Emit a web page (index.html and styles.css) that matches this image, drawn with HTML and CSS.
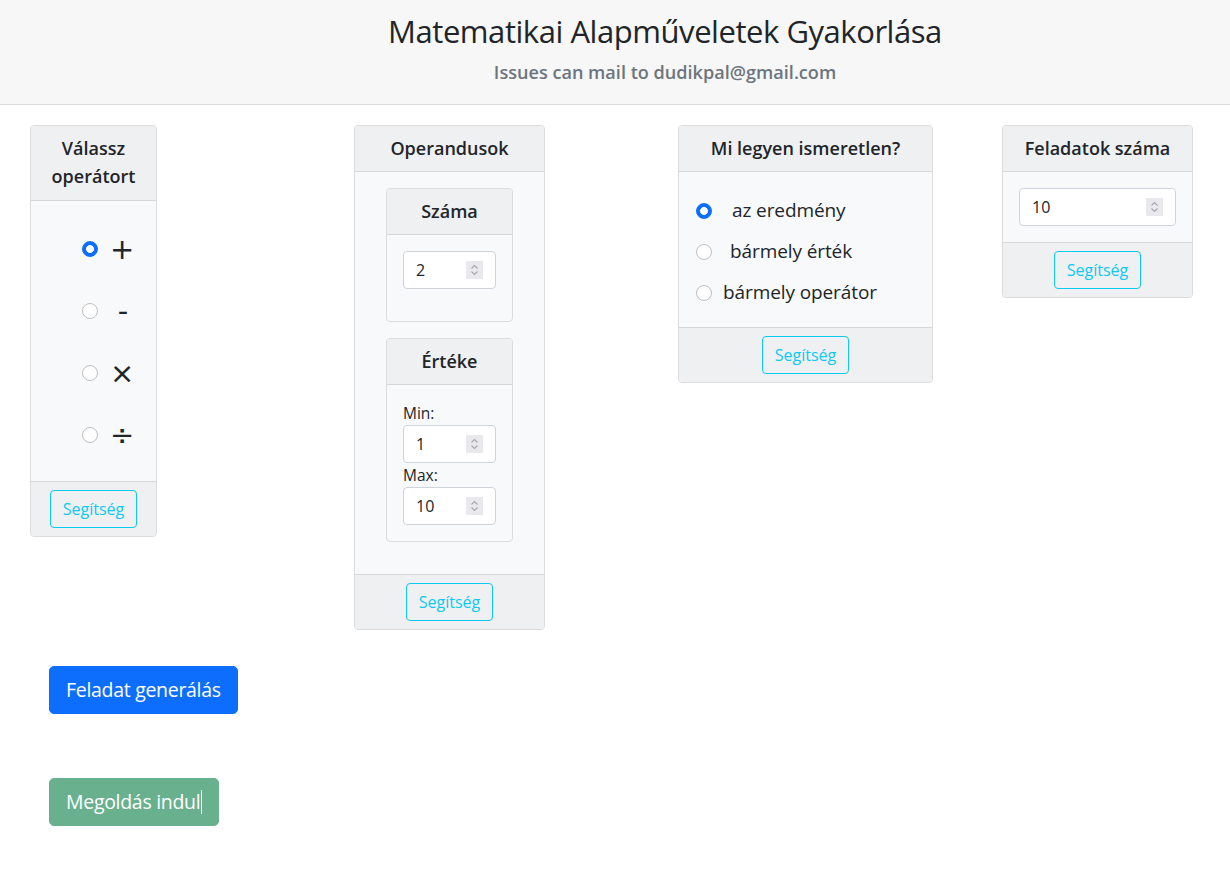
FILE: index.html
```html
<!DOCTYPE html>
<html lang="hu">
<head>
<meta charset="utf-8">
<title>Matematikai Alapműveletek Gyakorlása</title>
<link rel="stylesheet" href="styles.css">
</head>
<body>
<header class="page-header">
  <h1 class="title">Matematikai Alapműveletek Gyakorlása</h1>
  <p class="subtitle">Issues can mail to dudikpal@gmail.com</p>
</header>

<main class="main">
  <div class="cards">
    <section class="card card-ops">
      <div class="card-header ops-header">Válassz operátort</div>
      <div class="card-body ops-body">
        <label class="op-row"><input type="radio" name="op" class="radio" checked><span class="op-glyph">+</span></label>
        <label class="op-row"><input type="radio" name="op" class="radio"><span class="op-glyph op-minus">-</span></label>
        <label class="op-row"><input type="radio" name="op" class="radio"><span class="op-glyph">×</span></label>
        <label class="op-row"><input type="radio" name="op" class="radio"><span class="op-glyph">÷</span></label>
      </div>
      <div class="card-footer"><button class="btn-help">Segítség</button></div>
    </section>

    <section class="card card-operands">
      <div class="card-header">Operandusok</div>
      <div class="card-body operands-body">
        <div class="card inner-card">
          <div class="card-header">Száma</div>
          <div class="card-body inner-body">
            <div class="num-input"><input class="num-field" type="text" value="2"><span class="spin"><svg viewBox="0 0 17 18" width="17" height="18"><path d="M5.5 7.5 L8.5 4.5 L11.5 7.5 M5.5 10.5 L8.5 13.5 L11.5 10.5" fill="none" stroke="#a7a7ab" stroke-width="1.1"/></svg></span></div>
          </div>
        </div>
        <div class="card inner-card">
          <div class="card-header">Értéke</div>
          <div class="card-body inner-body value-body">
            <label class="field-label">Min:</label>
            <div class="num-input"><input class="num-field" type="text" value="1"><span class="spin"><svg viewBox="0 0 17 18" width="17" height="18"><path d="M5.5 7.5 L8.5 4.5 L11.5 7.5 M5.5 10.5 L8.5 13.5 L11.5 10.5" fill="none" stroke="#a7a7ab" stroke-width="1.1"/></svg></span></div>
            <label class="field-label">Max:</label>
            <div class="num-input"><input class="num-field" type="text" value="10"><span class="spin"><svg viewBox="0 0 17 18" width="17" height="18"><path d="M5.5 7.5 L8.5 4.5 L11.5 7.5 M5.5 10.5 L8.5 13.5 L11.5 10.5" fill="none" stroke="#a7a7ab" stroke-width="1.1"/></svg></span></div>
          </div>
        </div>
      </div>
      <div class="card-footer"><button class="btn-help">Segítség</button></div>
    </section>

    <section class="card card-unknown">
      <div class="card-header">Mi legyen ismeretlen?</div>
      <div class="card-body unknown-body">
        <label class="unk-row"><input type="radio" name="unk" class="radio" checked><span class="unk-text gap-a">az eredmény</span></label>
        <label class="unk-row"><input type="radio" name="unk" class="radio"><span class="unk-text gap-b">bármely érték</span></label>
        <label class="unk-row"><input type="radio" name="unk" class="radio"><span class="unk-text gap-c">bármely operátor</span></label>
      </div>
      <div class="card-footer"><button class="btn-help">Segítség</button></div>
    </section>

    <section class="card card-count">
      <div class="card-header">Feladatok száma</div>
      <div class="card-body count-body">
        <div class="num-input"><input class="num-field" type="text" value="10"><span class="spin"><svg viewBox="0 0 17 18" width="17" height="18"><path d="M5.5 7.5 L8.5 4.5 L11.5 7.5 M5.5 10.5 L8.5 13.5 L11.5 10.5" fill="none" stroke="#a7a7ab" stroke-width="1.1"/></svg></span></div>
      </div>
      <div class="card-footer"><button class="btn-help">Segítség</button></div>
    </section>
  </div>

  <div class="actions">
    <button class="btn-lg btn-primary">Feladat generálás</button>
    <button class="btn-lg btn-success" disabled>Megoldás indul<span class="caret"></span></button>
  </div>
</main>
</body>
</html>
```

FILE: styles.css
```css
* { box-sizing: border-box; }

html, body {
  margin: 0;
  padding: 0;
}

body {
  background: #ffffff;
  color: #212529;
  font-family: "Open Sans", "Noto Sans", sans-serif;
  font-size: 16px;
  line-height: 1.5;
}

.page-header {
  background: #f7f7f7;
  border-bottom: 1px solid #dcdcdc;
  height: 105px;
  display: flex;
  flex-direction: column;
  align-items: center;
  padding-left: 100px;
  padding-top: 10px;
}

.title {
  margin: 0;
  font-size: 31px;
  font-weight: 400;
  line-height: 42px;
  color: #212529;
  letter-spacing: -0.45px;
}

.subtitle {
  margin: 7px 0 0;
  font-size: 18.1px;
  font-weight: 600;
  line-height: 26px;
  color: #6c757d;
  letter-spacing: 0;
}

.main {
  padding: 20px 0 0 30px;
}

.cards {
  display: grid;
  grid-template-columns: 324px 324px 324px auto;
  align-items: start;
}

.card {
  background: #f8f9fa;
  border: 1px solid #dcdcdc;
  border-radius: 4px;
  overflow: hidden;
}

.card-header {
  background: #eff0f2;
  border-bottom: 1px solid #d7d8da;
  padding: 8px 10px 9px;
  text-align: center;
  font-weight: 600;
  font-size: 18px;
  line-height: 28px;
}

.ops-header {
  padding-bottom: 10px;
}

.card-footer {
  background: #eff0f2;
  border-top: 1px solid #d7d8da;
  padding: 8px;
  display: flex;
  justify-content: center;
}

.btn-help {
  font-family: inherit;
  font-size: 16px;
  line-height: 24px;
  height: 38px;
  padding: 6px 12px;
  color: #0dcaf0;
  background: transparent;
  border: 1px solid #0dcaf0;
  border-radius: 4px;
}

/* operator card */
.card-ops { width: 127px; }

.ops-body {
  padding: 17px 0 15px 51px;
  display: flex;
  flex-direction: column;
}

.op-row {
  height: 62px;
  display: flex;
  align-items: center;
  gap: 12px;
}

.radio {
  appearance: none;
  -webkit-appearance: none;
  margin: 0;
  width: 16px;
  height: 16px;
  flex: none;
  border-radius: 50%;
  border: 1px solid #bfbfbf;
  background: #ffffff;
}

.radio:checked {
  border-color: #0d6efd;
  background: radial-gradient(circle, #ffffff 0 3.6px, #0d6efd 4.2px);
}

.op-glyph {
  font-family: "DejaVu Sans", sans-serif;
  font-size: 29px;
  line-height: 1;
  width: 22px;
  text-align: center;
  color: #212529;
  font-weight: 400;
}

.op-minus {
  padding-left: 4px;
}

/* operands */
.card-operands { width: 191px; }

.operands-body {
  padding: 16px 31px 32px;
  display: flex;
  flex-direction: column;
  gap: 16px;
}

.inner-card { width: 127px; }

.inner-body {
  padding: 16px 16px 32px;
}

.value-body {
  padding-bottom: 16px;
  display: flex;
  flex-direction: column;
}

.field-label {
  font-size: 15.5px;
  line-height: 24px;
}

.num-input {
  height: 38px;
  background: #ffffff;
  border: 1px solid #ced4da;
  border-radius: 4px;
  display: flex;
  align-items: center;
  padding: 0 12px 0 12px;
}

.num-field {
  flex: 1;
  min-width: 0;
  border: 0;
  outline: 0;
  padding: 0;
  font-family: inherit;
  font-size: 16px;
  color: #212529;
  background: transparent;
}

.spin {
  flex: none;
  width: 17px;
  height: 18px;
  background: #e9e9ed;
  display: flex;
}

/* unknown card */
.card-unknown { width: 255px; }

.unknown-body {
  padding: 18px 16px 14px 17px;
  display: flex;
  flex-direction: column;
}

.unk-row {
  height: 41px;
  display: flex;
  align-items: center;
}

.unk-text {
  font-size: 19px;
  letter-spacing: -0.1px;
}

.gap-a { margin-left: 20px; }
.gap-b { margin-left: 18px; }
.gap-c { margin-left: 11px; }

/* count card */
.card-count { width: 191px; }

.count-body {
  padding: 16px 16px 16px;
}

/* action buttons */
.actions {
  display: flex;
  flex-direction: column;
  align-items: flex-start;
  gap: 64px;
  padding: 36px 0 0 19px;
}

.btn-lg {
  font-family: inherit;
  font-size: 19.5px;
  line-height: 30px;
  height: 48px;
  padding: 8px 16px;
  border: 1px solid transparent;
  border-radius: 5px;
  color: #ffffff;
  letter-spacing: -0.3px;
}

.btn-primary {
  background: #0d6efd;
  border-color: #0d6efd;
}

.btn-success {
  background: #69b08f;
  border-color: #69b08f;
  display: flex;
  align-items: center;
}

.caret {
  display: inline-block;
  width: 1px;
  height: 24px;
  background: #ffffff;
  margin-left: 1px;
}
```
